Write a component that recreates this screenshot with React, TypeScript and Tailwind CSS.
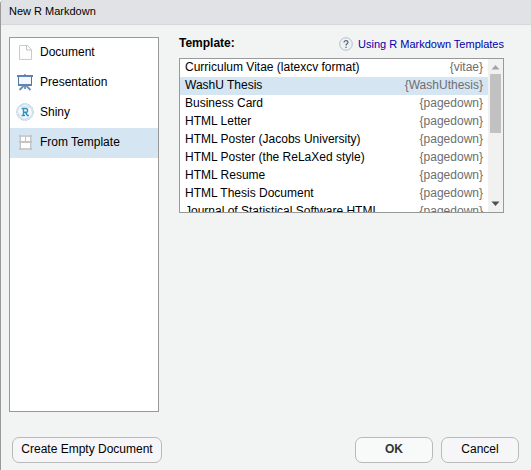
import { useState } from "react";
import type { ReactNode } from "react";

function DocumentIcon() {
  return (
    <svg width="18" height="18" viewBox="0 0 18 18" fill="none" aria-hidden="true">
      <path d="M3.500 2.500h8l4 4v10h-12z" fill="#fdfdfd" stroke="#cacaca" />
      <path d="M10.500 2.500v4.500h5" stroke="#bcc3c9" />
    </svg>
  );
}

function PresentationIcon() {
  return (
    <svg width="18" height="18" viewBox="0 0 18 18" fill="none" aria-hidden="true">
      <path d="M8 1h2v1H8z" fill="#8da5c4" />
      <path d="M1 2h16v2H1z" fill="#5f83b0" />
      <path d="M2.500 4v8h13V4" fill="#f4f8fc" stroke="#4c75a8" />
      <path d="M2 11h14v2H2z" fill="#5f83b0" />
      <path d="M9 13v3M7.500 13l-4 4M10.500 13l4 4" stroke="#6f8db3" strokeWidth="1.800" />
    </svg>
  );
}

function ShinyIcon() {
  return (
    <svg width="18" height="18" viewBox="0 0 18 18" fill="none" aria-hidden="true">
      <circle cx="9" cy="9" r="8.300" fill="#f7fafc" stroke="#b4cfe2" strokeDasharray="3 0.5" />
      <path
        d="M9 1 4 3 1.500 8 3 13.500 8 16.500 13.500 15 16.500 10 15 4.500zM4 3l5 .5 6 1M3 13.500l1.500-3M8 16.500l-3.500-2M8 16.500l4-2"
        stroke="#c3d9e8"
        strokeWidth="0.800"
      />
      <path d="M5.500 5.500h4.200a1.900 1.900 0 0 1 0 3.800H7.500M7.500 5.500v7M5.500 12.500h3.500M9.500 9.500l2 3H13" stroke="#3390c4" strokeWidth="1.400" />
    </svg>
  );
}

function TemplateIcon() {
  return (
    <svg width="18" height="18" viewBox="0 0 18 18" fill="none" aria-hidden="true">
      <path d="M3 2h13v15H3z" fill="#c4c4c4" />
      <path d="M5 4h4v4H5zM10 4h4v4h-4zM5 10h9v5H5z" fill="#fdfdfd" />
      <path d="M5 3h9M5 16h9M3.500 4v4M3.500 10v5M15.500 4v4M15.500 10v5" stroke="#dadada" strokeWidth="0.800" />
    </svg>
  );
}

const kinds: { name: string; icon: ReactNode }[] = [
  { name: "Document", icon: <DocumentIcon /> },
  { name: "Presentation", icon: <PresentationIcon /> },
  { name: "Shiny", icon: <ShinyIcon /> },
  { name: "From Template", icon: <TemplateIcon /> },
];

const templates = [
  ["Curriculum Vitae (latexcv format)", "{vitae}"],
  ["WashU Thesis", "{WashUthesis}"],
  ["Business Card", "{pagedown}"],
  ["HTML Letter", "{pagedown}"],
  ["HTML Poster (Jacobs University)", "{pagedown}"],
  ["HTML Poster (the ReLaXed style)", "{pagedown}"],
  ["HTML Resume", "{pagedown}"],
  ["HTML Thesis Document", "{pagedown}"],
  ["Journal of Statistical Software HTML", "{pagedown}"],
];

function ScrollBar() {
  return (
    <div className="flex w-[15px] shrink-0 flex-col items-center bg-[#f1f1f1]" aria-hidden="true">
      <svg width="15" height="15" viewBox="0 0 15 15" className="shrink-0">
        <path d="M3.500 10.500h8L7.500 6z" fill="#a3a3a3" />
      </svg>
      <div className="h-[59px] w-[11px] shrink-0 bg-[#c1c1c1]" />
      <div className="grow" />
      <svg width="15" height="15" viewBox="0 0 15 15" className="shrink-0">
        <path d="M3.500 4.500h8L7.500 9z" fill="#505050" />
      </svg>
    </div>
  );
}

export default function App() {
  const [kind, setKind] = useState("From Template");
  const [template, setTemplate] = useState("WashU Thesis");
  return (
    <div
      role="dialog"
      aria-labelledby="dialog-title"
      className="flex min-h-screen flex-col rounded-tl-sm border-l border-[#999] bg-[#f2f4f4] font-['Liberation_Sans',Arial,sans-serif] text-[12px] leading-[16px] text-black"
    >
      <header className="flex h-[25px] items-center rounded-tl-sm border-b border-[#d6d8da] bg-[#e1e2e5] px-2 pb-[2px]">
        <h1 id="dialog-title" className="text-[11px]">New R Markdown</h1>
      </header>

      <main className="flex grow gap-5 pt-3 pr-[27px] pl-2">
        <nav aria-label="Document type" className="w-[150px] shrink-0 border border-[#999] bg-white">
          {kinds.map(({ name, icon }) => (
            <button
              key={name}
              type="button"
              aria-pressed={kind === name}
              onClick={() => setKind(name)}
              className={`flex h-[30px] w-full items-center gap-[6px] px-[6px] pb-[2px] text-left ${kind === name ? "bg-[#d6e5f2]" : ""}`}
            >
              {icon}
              <span>{name}</span>
            </button>
          ))}
        </nav>

        <section className="min-w-0 grow">
          <div className="flex h-[21px] justify-between">
            <h2 id="template-label" className="leading-[12px] font-bold">Template:</h2>
            <a href="#templates" className="flex h-[14px] items-center gap-[5px] text-[11px] leading-[14px] text-[#0000aa]">
              <svg width="14" height="14" viewBox="0 0 14 14" fill="none" aria-hidden="true">
                <circle cx="7" cy="7" r="6.300" fill="#eef2f5" stroke="#b4bfc8" />
                <path d="M5 5.500c0-2.500 4-2.300 4-.2C9 6.800 7 6.800 7 8.500M7 9.700V11" stroke="#53677c" strokeWidth="1.200" />
              </svg>
              Using R Markdown Templates
            </a>
          </div>
          <div className="flex h-[155px] border border-[#999] bg-white">
            <ul role="listbox" aria-labelledby="template-label" className="grow overflow-hidden">
              {templates.map(([name, pkg]) => (
                <li
                  key={name}
                  role="option"
                  aria-selected={template === name}
                  onClick={() => setTemplate(name)}
                  className={`flex h-[18px] cursor-default justify-between px-[5px] ${template === name ? "bg-[#d6e5f2]" : ""}`}
                >
                  <span>{name}</span>
                  <span className="text-[#6e6e6e]">{pkg}</span>
                </li>
              ))}
            </ul>
            <ScrollBar />
          </div>
        </section>
      </main>

      <footer className="flex gap-2 pt-[25px] pr-3 pb-[7px] pl-[11px]">
        <button type="button" className="mr-auto h-[26px] w-[150px] rounded-[7px] border border-[#b9b9b9] bg-[#f6f6f9] pb-[2px]">
          Create Empty Document
        </button>
        <button type="button" className="h-[26px] w-[78px] rounded-[7px] border border-[#b9b9b9] bg-[#f8f9f9] pb-[2px] font-bold text-[#333]">
          OK
        </button>
        <button type="button" className="h-[26px] w-[78px] rounded-[7px] border border-[#b9b9b9] bg-[#f6f6f9] pb-[2px]">
          Cancel
        </button>
      </footer>
    </div>
  );
}
